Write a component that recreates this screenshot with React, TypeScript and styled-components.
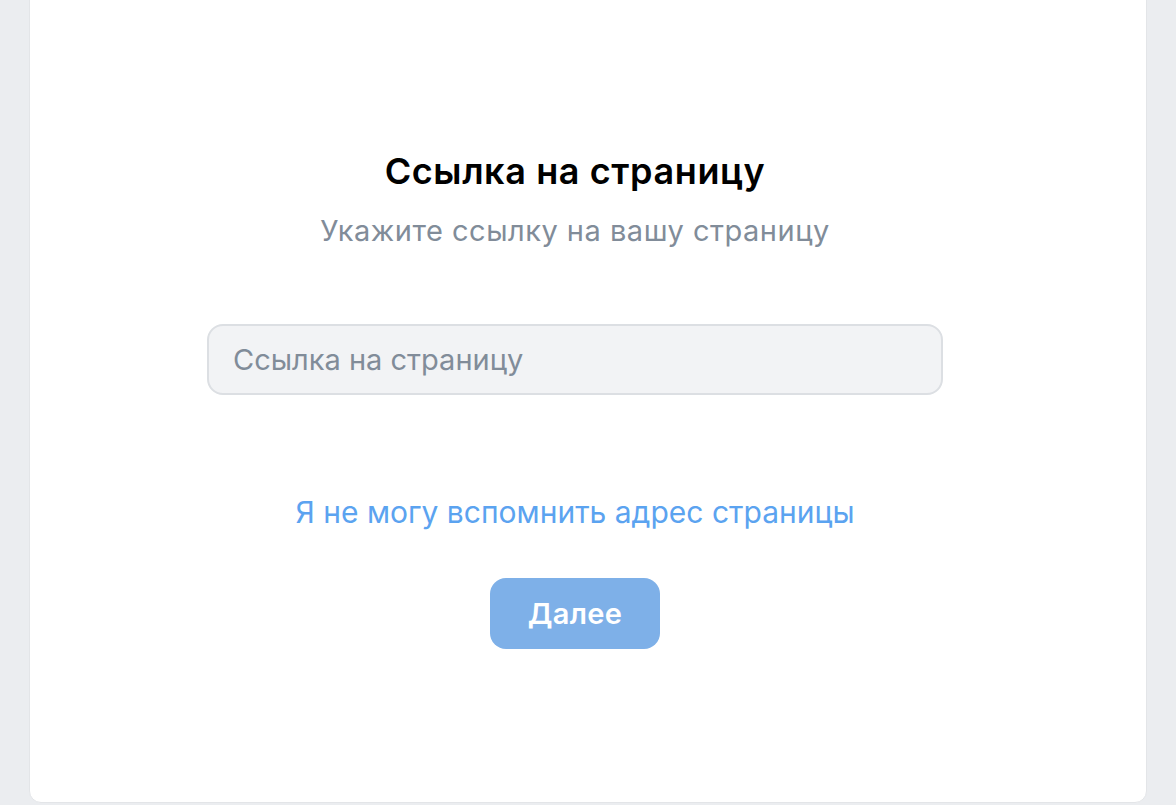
import React from 'react';
import styled, {createGlobalStyle} from 'styled-components';

const GlobalStyle = createGlobalStyle`
    html, body {
        margin: 0;
        padding: 0;
        background: #ebedf0;
        font-family: Inter, "Noto Sans", "Liberation Sans", sans-serif;
        -webkit-font-smoothing: antialiased;
    }
`;

const Page = styled.div`
    display: flex;
    justify-content: center;
    height: 805px;
    overflow: hidden;
`;

const Card = styled.div`
    width: 1118px;
    height: 815px;
    margin-top: -12px;
    background: #fff;
    border: 1px solid #e3e5e8;
    border-radius: 12px;
    display: flex;
    flex-direction: column;
    align-items: center;
    box-sizing: border-box;
    padding: 160px 26px 0 0;
`;

const Title = styled.h1`
    margin: 0;
    font-size: 36px;
    line-height: 44px;
    font-weight: 600;
    color: #000;
    letter-spacing: 0.6px;
`;

const Subtitle = styled.p`
    margin: 20px 0 0;
    font-size: 29px;
    line-height: 36px;
    font-weight: 400;
    color: #818c99;
    letter-spacing: 0.5px;
`;

const Field = styled.input`
    margin-top: 75px;
    width: 736px;
    height: 71px;
    box-sizing: border-box;
    padding: 0 24px;
    background: #f2f3f5;
    border: 2px solid #dcdfe3;
    border-radius: 16px;
    font-family: inherit;
    font-size: 29px;
    color: #000;
    outline: none;

    &::placeholder {
        color: #818c99;
    }
`;

const Link = styled.a`
    margin-top: 99px;
    font-size: 30px;
    line-height: 36px;
    color: #5ba3f0;
    text-decoration: none;
    cursor: pointer;
`;

const Button = styled.button<{ $disabled?: boolean }>`
    margin-top: 48px;
    width: 170px;
    height: 71px;
    border: none;
    border-radius: 16px;
    background: ${p => p.$disabled ? '#7eb0e8' : '#2688eb'};
    color: #fff;
    font-family: inherit;
    font-size: 29px;
    font-weight: 600;
    letter-spacing: 0.3px;
`;

export default function App() {
    return (
        <>
            <GlobalStyle/>
            <Page>
                <Card>
                    <Title>Ссылка на страницу</Title>
                    <Subtitle>Укажите ссылку на вашу страницу</Subtitle>
                    <Field placeholder="Ссылка на страницу"/>
                    <Link>Я не могу вспомнить адрес страницы</Link>
                    <Button $disabled>Далее</Button>
                </Card>
            </Page>
        </>
    );
}
